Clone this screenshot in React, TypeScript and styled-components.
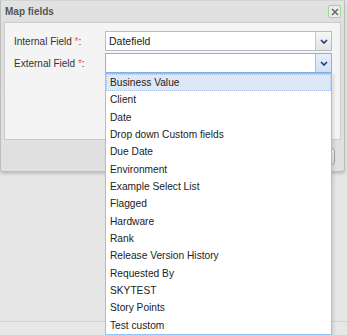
import React from "react";
import styled, { createGlobalStyle } from "styled-components";

const GlobalStyle = createGlobalStyle`
  html, body { margin: 0; padding: 0; }
  body {
    background: #e6e6e6;
    font-family: "Liberation Sans", Arial, sans-serif;
    font-size: 10px;
    color: #333;
  }
`;

const Page = styled.div`
  position: relative;
  width: 347px;
  height: 335px;
  overflow: hidden;
  display: flex;
  flex-direction: column;
`;

const Window = styled.div`
  width: 345px;
  box-sizing: border-box;
  border: 1px solid #bdbdbd;
  border-top-color: #d4d4d4;
  border-radius: 0 0 3px 3px;
  background: linear-gradient(#e2e2e2, #dedede 30px, #e0e0e0);
  box-shadow: 0 2px 3px rgba(0, 0, 0, 0.16);
  padding: 0 3px;
`;

const Header = styled.div`
  height: 21px;
  display: flex;
  align-items: center;
  justify-content: space-between;
  padding-left: 1px;
`;

const Title = styled.span`
  font-weight: bold;
  font-size: 10px;
  color: #555;
`;

const CloseButton = styled.div`
  width: 13px;
  height: 13px;
  box-sizing: border-box;
  border: 1.5px solid #9ad59a;
  border-radius: 2px;
  background: #ececec;
  display: flex;
  align-items: center;
  justify-content: center;
`;

const Body = styled.div`
  height: 118px;
  box-sizing: border-box;
  border: 1px solid #cbcbcb;
  background: #f4f4f4;
  padding: 8px 8px 0 9px;
  display: flex;
  flex-direction: column;
  gap: 2px;
`;

const FormRow = styled.div`
  display: flex;
  align-items: center;
  height: 20px;
`;

const Label = styled.div`
  width: 91px;
  color: #333;
`;

const Required = styled.span`
  color: #f05a5a;
`;

const Field = styled.div<{ $focused?: boolean }>`
  flex: 1;
  height: 20px;
  box-sizing: border-box;
  display: flex;
  border: 1px solid ${(p) => (p.$focused ? "#86b3e0" : "#b9bcc8")};
  background: #fff;
`;

const FieldText = styled.div`
  flex: 1;
  padding-left: 3px;
  display: flex;
  align-items: center;
  color: #222;
  font-size: 10.5px;
`;

const Trigger = styled.div<{ $focused?: boolean }>`
  width: 15px;
  border-left: 1px solid ${(p) => (p.$focused ? "#9fc3e8" : "#c4c6ce")};
  background: ${(p) =>
    p.$focused
      ? "linear-gradient(#e6eef9, #d3e1f3)"
      : "linear-gradient(#f6f6f6, #e4e4e4)"};
  display: flex;
  align-items: center;
  justify-content: center;
`;

const Footer = styled.div`
  height: 31px;
  box-sizing: border-box;
  padding: 8px 6px 0 0;
  display: flex;
  justify-content: flex-end;
  align-items: flex-start;
`;

const FooterButton = styled.div`
  width: 70px;
  height: 17px;
  box-sizing: border-box;
  border: 1px solid #a9a9a9;
  border-radius: 3px;
  background: linear-gradient(#f4f4f4, #e0e0e0);
`;

const BottomBar = styled.div`
  margin-top: 149px;
  flex: 1;
  border-top: 1px solid #d2d2d2;
  background: #e7e7e7;
`;

const List = styled.div`
  position: absolute;
  top: 73px;
  left: 105px;
  width: 227px;
  height: 262px;
  box-sizing: border-box;
  border: 1px solid #99c0ee;
  background: #fff;
  box-shadow: 2px 1px 3px rgba(0, 0, 0, 0.1);
`;

const Item = styled.div<{ $active?: boolean }>`
  height: 17.33px;
  box-sizing: border-box;
  padding-left: 3px;
  display: flex;
  align-items: center;
  color: #222;
  font-size: 10.2px;
  border: 1px ${(p) => (p.$active ? "dotted #a8bfe6" : "solid transparent")};
  background: ${(p) => (p.$active ? "#dfe8f6" : "transparent")};
`;

const Chevron = () => (
  <svg width="8" height="5" viewBox="0 0 8 5">
    <path d="M1 1 L4 4 L7 1" fill="none" stroke="#1d3c78" strokeWidth="1.6" />
  </svg>
);

const CloseIcon = () => (
  <svg width="8" height="8" viewBox="0 0 8 8">
    <path d="M1 1 L7 7 M7 1 L1 7" stroke="#666" strokeWidth="1.5" />
  </svg>
);

const items = [
  "Business Value",
  "Client",
  "Date",
  "Drop down Custom fields",
  "Due Date",
  "Environment",
  "Example Select List",
  "Flagged",
  "Hardware",
  "Rank",
  "Release Version History",
  "Requested By",
  "SKYTEST",
  "Story Points",
  "Test custom",
];

export default function App() {
  return (
    <>
      <GlobalStyle />
      <Page>
        <Window>
          <Header>
            <Title>Map fields</Title>
            <CloseButton>
              <CloseIcon />
            </CloseButton>
          </Header>
          <Body>
            <FormRow>
              <Label>
                Internal Field <Required>*</Required>:
              </Label>
              <Field>
                <FieldText>Datefield</FieldText>
                <Trigger>
                  <Chevron />
                </Trigger>
              </Field>
            </FormRow>
            <FormRow>
              <Label>
                External Field <Required>*</Required>:
              </Label>
              <Field $focused>
                <FieldText />
                <Trigger $focused>
                  <Chevron />
                </Trigger>
              </Field>
            </FormRow>
          </Body>
          <Footer>
            <FooterButton />
          </Footer>
        </Window>
        <BottomBar />
        <List>
          {items.map((it, i) => (
            <Item key={it} $active={i === 0}>
              {it}
            </Item>
          ))}
        </List>
      </Page>
    </>
  );
}
